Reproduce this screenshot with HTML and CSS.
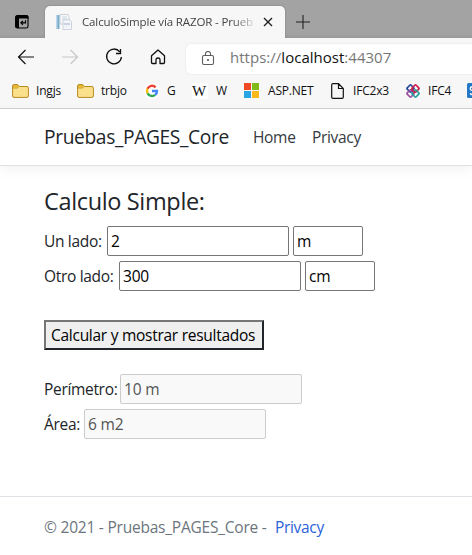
FILE: index.html
```html
<!DOCTYPE html>
<html lang="es">
<head>
<meta charset="utf-8">
<title>CalculoSimple vía RAZOR</title>
<link rel="stylesheet" href="styles.css">
</head>
<body>
<div class="tabstrip">
  <svg class="tabs-icon" width="16" height="16" viewBox="0 0 16 16"><rect x="1.600" y="1.600" width="12.400" height="12.400" rx="1.800" fill="none" stroke="#000" stroke-width="1.100"/><path d="M1.500 2.500 2.500 1.500h11l1 1v2H5V14H2.500l-1-1z"/><path d="M11.500 6.200v2.600H7M8.900 6.800 6.900 8.800l2 2" fill="none" stroke="#000" stroke-width="1.200"/></svg>
  <div class="tab">
    <svg width="16" height="16" viewBox="0 0 16 16"><path d="M0 1h4v14H0z" fill="#b8d7ea"/><path d="M1.500 1H3v14H1.500z" fill="#78a9cb"/><path d="M4 .5h8l1 2V10H4z" fill="#f5f7f8" stroke="#b7c1c9" stroke-width=".7"/><path d="M6 3h5M6 5h5" stroke="#c9d6df"/><path d="M7 6h7l1.500 2v7.500H7z" fill="#f7f9fb" stroke="#b7c1ce" stroke-width=".7"/><path d="M8 9h6v2H8zM8 13h6" fill="#c5d0df" stroke="#d5dce6" stroke-width=".5"/></svg>
    <span class="tab-title">CalculoSimple vía RAZOR - Prueb</span>
    <svg class="close" width="10" height="10" viewBox="0 0 10 10"><path d="m1 1 8 8M9 1 1 9" fill="none" stroke="#222" stroke-width="1.400"/></svg>
  </div>
  <svg class="plus" width="14" height="14" viewBox="0 0 14 14"><path d="M7 0v14M0 7h14" stroke="#222" stroke-width="1.100"/></svg>
</div>
<div class="toolbar">
  <svg width="18" height="18" viewBox="0 0 18 18" fill="none" stroke="#111" stroke-width="1.200"><path d="M17 9H1.500M8.500 2 1.500 9l7 7"/></svg>
  <svg width="18" height="18" viewBox="0 0 18 18" fill="none" stroke="#c8c8c8" stroke-width="1.200"><path d="M1 9h15.500M9.500 2l7 7-7 7"/></svg>
  <svg width="18" height="18" viewBox="0 0 18 18" fill="none" stroke="#111" stroke-width="1.300"><path d="M14.800 3.800A7.400 7.400 0 1 0 16.400 9M15.500 1v4.500H11"/></svg>
  <svg width="18" height="18" viewBox="0 0 18 18" fill="none" stroke="#111" stroke-width="1.300" stroke-linejoin="round"><path d="M2.500 7.800 9 2l6.500 5.800v6.700q0 1-1 1H11v-4q0-1.500-2-1.500t-2 1.500v4H3.500q-1 0-1-1z"/></svg>
  <div class="address">
    <svg width="14" height="16" viewBox="0 0 14 16" fill="none" stroke="#5c5c5c" stroke-width="1.100"><rect x="1.500" y="4.500" width="11" height="9" rx="1.500"/><path d="M4.500 4.500V2.800a2.500 2.300 0 0 1 5 0v1.700"/><circle cx="7" cy="9" r=".5" fill="#444"/></svg>
    <span class="url">https://<b>localhost</b>:44307</span>
  </div>
</div>
<div class="bookmarks">
  <span class="bm folder"><svg width="17" height="14" viewBox="0 0 17 14"><path d="M.6 2Q.6.6 2 .6h3.500L7.500 2.500H15q1.400 0 1.400 1.400V12q0 1.400-1.400 1.400H2Q.6 13.400.6 12z" fill="#fbe08c" stroke="#b78b22"/><path d="M1 2q0-1 1-1h3.500L7 2.500 5.500 4.200H1z" fill="#edbd38" stroke="#b78b22" stroke-width=".5"/></svg><span>Ingjs</span></span>
  <span class="bm folder two"><svg width="17" height="14" viewBox="0 0 17 14"><path d="M.6 2Q.6.6 2 .6h3.500L7.500 2.500H15q1.400 0 1.400 1.400V12q0 1.400-1.400 1.400H2Q.6 13.400.6 12z" fill="#fbe08c" stroke="#b78b22"/><path d="M1 2q0-1 1-1h3.500L7 2.500 5.500 4.200H1z" fill="#edbd38" stroke="#b78b22" stroke-width=".5"/></svg><span>trbjo</span></span>
  <span class="bm google"><svg width="16" height="16" viewBox="0 0 16 16" fill="none" stroke-width="2.400"><circle cx="8" cy="8" r="8" fill="#fff"/><path d="M11.600 4.300A5 5 0 0 0 3.500 5.800" stroke="#ea4335"/><path d="M3.500 5.800a5 5 0 0 0 0 4.400" stroke="#fbbc05"/><path d="M3.500 10.200a5 5 0 0 0 7.700 1.600" stroke="#34a853"/><path d="M8 8h5q0 2.500-1.800 3.800" stroke="#4285f4"/></svg><span>G</span></span>
  <span class="bm wiki"><i>W</i><span>W</span></span>
  <span class="bm asp"><svg width="15" height="15" viewBox="0 0 15 15"><path d="M0 0h7v7H0z" fill="#ef4923"/><path d="M8 0h7v7H8z" fill="#80b918"/><path d="M0 8h7v7H0z" fill="#29a5e3"/><path d="M8 8h7v7H8z" fill="#fdb81b"/></svg><span>ASP.NET</span></span>
  <span class="bm page"><svg width="13" height="16" viewBox="0 0 13 16" fill="none" stroke="#111" stroke-width="1.200"><path d="M2 .7h5.500l4.800 4.800V14q0 1.300-1.300 1.300H2Q.7 15.300.7 14V2Q.7.700 2 .7zM7.500 1v4.500h4.500"/></svg><span>IFC2x3</span></span>
  <span class="bm ifc"><svg width="16" height="16" viewBox="0 0 16 16" fill="none" stroke-width="1.700" stroke-linejoin="round"><rect x="2.700" y="2.700" width="5.600" height="5.600" rx="1" transform="rotate(45 5.500 5.500)" stroke="#284a9c"/><rect x="7.700" y="2.700" width="5.600" height="5.600" rx="1" transform="rotate(45 10.500 5.500)" stroke="#d01e49"/><rect x="2.700" y="7.700" width="5.600" height="5.600" rx="1" transform="rotate(45 5.500 10.500)" stroke="#9a4fa1"/><rect x="7.700" y="7.700" width="5.600" height="5.600" rx="1" transform="rotate(45 10.500 10.500)" stroke="#279e9b"/><path d="m6 6 4 4" stroke="#c62857"/></svg><span>IFC4</span></span>
  <svg width="5" height="15" viewBox="0 0 5 15"><path d="M5 0H1.500Q0 0 0 1.500v12Q0 15 1.500 15H5z" fill="#2479c7"/><path d="M5 4H4q-1.500 1.500 0 3l1 .5M3 10.500q1 1 2 1" fill="none" stroke="#fff" stroke-width="1.300"/></svg>
</div>
<header class="navbar">
  <a class="brand">Pruebas_PAGES_Core</a>
  <a class="home">Home</a>
  <a class="privacy">Privacy</a>
</header>
<main>
  <h4>Calculo Simple:</h4>
  <div class="row"><label class="l1">Un lado:</label><input value="2"><input class="unit" value="m"></div>
  <div class="row"><label class="l2">Otro lado:</label><input value="300"><input class="unit" value="cm"></div>
  <button><span>Calcular y mostrar resultados</span></button>
  <div class="row"><label class="l3">Perímetro:</label><input disabled value="10 m"></div>
  <div class="row"><label class="l4">Área:</label><input disabled value="6 m2"></div>
</main>
<footer><span class="copy">© 2021 - Pruebas_PAGES_Core - </span><a>Privacy</a></footer>
</body>
</html>
```

FILE: styles.css
```css
* { box-sizing: border-box; }
body { margin: 0; height: 555px; overflow: hidden; background: #fff; color: #212529; font: 15.5px/24px "Open Sans", "Noto Sans", sans-serif; letter-spacing: -.32px; white-space: nowrap; }
svg { display: block; flex: none; }
.tabstrip { height: 38px; background: linear-gradient(#a3a3a3 34px, #989898); display: flex; }
.tabs-icon { margin: 14px 15px 0 14px; }
.tab { width: 240px; height: 32px; margin-top: 6px; padding: 0 12px 0 11px; border-radius: 5px 5px 0 0; background: #f7f7f7; box-shadow: 0 0 2px #777; display: flex; align-items: center; }
.tab-title { width: 174px; margin-left: 10px; font-size: 11.5px; letter-spacing: -.13px; color: #444; -webkit-mask-image: linear-gradient(90deg, #000 150px, transparent 176px); }
.close { margin-left: 8px; }
.plus { margin: 15px 0 0 11px; }
.toolbar { position: relative; height: 37px; background: #f7f7f7; padding: 4px 0 0 17px; display: flex; align-items: center; gap: 26px; }
.toolbar > svg { position: relative; top: -2px; }
.address { flex: 1; height: 30px; margin-left: -7px; padding-left: 15px; background: #fff; border-radius: 5px 0 0 5px; box-shadow: 0 0 2px #ddd; display: flex; align-items: center; }
.url { margin: -3px 0 0 15px; font-size: 15px; color: #777; letter-spacing: .02px; }
.url b { color: #111; font-weight: 400; }
.bookmarks { height: 34px; background: #f7f7f7; border-bottom: 1px solid #d0d0d0; display: flex; align-items: center; font-size: 12px; letter-spacing: -.2px; color: #111; padding: 0 0 2px 12px; }
.bm { display: flex; align-items: center; flex: none; height: 30px; }
.bm > span { margin-left: 8px; }
.folder { width: 65px; }
.folder > span { margin-left: 7px; }
.two { width: 67px; }
.google { width: 48px; }
.google > span { margin-left: 7px; }
.wiki { width: 52px; }
.wiki i { width: 16px; height: 16px; background: #fff; font: 15px/16px "Liberation Serif", serif; letter-spacing: -1px; }
.asp { width: 87px; }
.asp > span { margin-left: 9px; }
.page { width: 74px; }
.page > span { margin-left: 9px; }
.ifc { width: 62px; }
.ifc > span { margin-left: 7px; }
.navbar { height: 57px; border-bottom: 1px solid #dee2e6; box-shadow: 0 4px 12px rgba(0,0,0,.05); display: flex; align-items: center; padding-left: 44px; color: #343a40; }
.brand { width: 209px; font-size: 19.2px; letter-spacing: -.36px; color: #212529; }
.home { width: 59px; }
main { padding: 20px 0 0 44px; }
h4 { margin: 0 0 9px; font-size: 23.5px; line-height: 31px; font-weight: 400; letter-spacing: -.35px; }
.row { display: flex; gap: 4px; height: 35px; align-items: flex-start; }
label { line-height: 30px; flex: none; }
.l1 { width: 59px; }
.l2 { width: 71px; }
.l3 { width: 72px; }
.l4 { width: 36px; }
input { width: 182px; height: 30px; border: 1px solid #767676; border-radius: 2px; background: #fff; color: #000; padding: 0 3px; font: 15.5px/28px "Open Sans", sans-serif; letter-spacing: -.2px; }
.unit { width: 70px; }
input:disabled { background: #f9f9f9; border-color: #ccc; color: #545454; }
button { display: block; width: 220px; height: 30px; margin: 24px 0; padding: 0 5px; border: 2px solid; border-color: #767676 #212529 #212529 #767676; background: #efefef; color: #000; font: 15.5px/26px "Open Sans", sans-serif; letter-spacing: -.27px; text-align: left; }
footer { margin-top: 52px; height: 58px; border-top: 1px solid #dee2e6; padding-left: 44px; line-height: 60px; color: #6c757d; display: flex; }
.copy { width: 231px; letter-spacing: -.22px; }
footer a { color: #2a62d9; }
```
